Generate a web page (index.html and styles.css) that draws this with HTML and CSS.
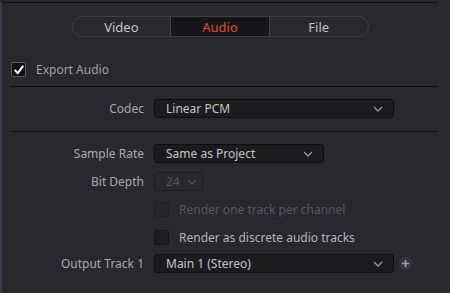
FILE: index.html
```html
<!DOCTYPE html>
<html lang="en">
<head>
    <meta charset="UTF-8">
    <title>Render Settings - Audio</title>
    <link rel="stylesheet" href="styles.css">
</head>
<body>

<div class="panel">
    <div class="topline"></div>

    <div class="tabs">
        <div class="tab">Video</div>
        <div class="tab active">Audio</div>
        <div class="tab">File</div>
    </div>

    <label class="check-row export">
        <span class="box checked">
            <svg width="12" height="12" viewBox="0 0 12 12"><path d="M2.2 6.4 L4.8 9.2 L9.8 2.4" fill="none" stroke="#fff" stroke-width="2" stroke-linecap="round" stroke-linejoin="round"/></svg>
        </span>
        Export Audio
    </label>

    <div class="divider"></div>

    <div class="row codec">
        <div class="label">Codec</div>
        <div class="select wide">Linear PCM <svg class="chev" width="10" height="6" viewBox="0 0 10 6"><path d="M1 1 L5 5 L9 1" fill="none" stroke="#9a9a9a" stroke-width="1.3"/></svg></div>
    </div>

    <div class="divider"></div>

    <div class="row rate">
        <div class="label">Sample Rate</div>
        <div class="select mid">Same as Project <svg class="chev" width="10" height="6" viewBox="0 0 10 6"><path d="M1 1 L5 5 L9 1" fill="none" stroke="#9a9a9a" stroke-width="1.3"/></svg></div>
    </div>

    <div class="row depth">
        <div class="label">Bit Depth</div>
        <div class="select small disabled">24 <svg class="chev" width="10" height="6" viewBox="0 0 10 6"><path d="M1 1 L5 5 L9 1" fill="none" stroke="#4e4e54" stroke-width="1.3"/></svg></div>
    </div>

    <div class="row opt first">
        <div class="label"></div>
        <label class="check-row disabled"><span class="box"></span>Render one track per channel</label>
    </div>

    <div class="row opt">
        <div class="label"></div>
        <label class="check-row"><span class="box"></span>Render as discrete audio tracks</label>
    </div>

    <div class="row output">
        <div class="label">Output Track 1</div>
        <div class="select wide">Main 1 (Stereo) <svg class="chev" width="10" height="6" viewBox="0 0 10 6"><path d="M1 1 L5 5 L9 1" fill="none" stroke="#9a9a9a" stroke-width="1.3"/></svg></div>
        <span class="add">
            <svg width="9" height="9" viewBox="0 0 9 9"><path d="M4.5 1 V8 M1 4.5 H8" stroke="#a0a0a4" stroke-width="1.6"/></svg>
        </span>
    </div>
</div>

</body>
</html>
```

FILE: styles.css
```css
body {
    margin: 0;
    background-color: #28282d;
    font-family: "Noto Sans", "Open Sans", sans-serif;
    font-size: 12px;
    color: #a8a8ac;
}
.panel {
    height: 293px;
    border-left: 2px solid #34404f; /* bord bleuté de la fenêtre */
    padding-right: 12px;
    box-sizing: border-box;
}
.topline {
    height: 0;
    margin-top: 2px;
    border-top: 1px solid #0e0e10;
}
.tabs {
    display: flex;
    width: 297px;
    height: 21px;
    margin: 13px auto 0;
    border: 1px solid #414148;
    border-radius: 11px;
    overflow: hidden;
    box-sizing: border-box;
}
.tab {
    flex: 1;
    display: flex;
    align-items: center;
    justify-content: center;
    font-size: 13px;
    color: #c4c4c8;
}
.tab.active {
    background-color: #161618;
    color: #e5483a;
    border-left: 1px solid #414148;
    border-right: 1px solid #414148;
}
.check-row {
    display: flex;
    align-items: center;
    gap: 10px;
    height: 15px;
    color: #b4b4b8;
}
.check-row.export {
    margin: 25px 0 0 9px;
    color: #a0a0a4;
}
.check-row.disabled {
    color: #58585e;
}
.box {
    width: 15px;
    height: 15px;
    box-sizing: border-box;
    background-color: #1e1e21;
    border: 1px solid #141416;
    border-radius: 2px;
    display: flex;
    align-items: center;
    justify-content: center;
}
.check-row.disabled .box {
    background-color: #262629;
    border-color: #1f1f22;
}
.box.checked {
    background-color: #111113;
    border-color: #5a5a60;
}
.divider {
    margin-left: 9px;
    border-top: 1px solid #0e0e10;
}
.check-row.export + .divider {
    margin-top: 9px;
}
.row {
    display: flex;
    align-items: center;
}
.label {
    width: 142px;
    padding-right: 10px;
    text-align: right;
    color: #a8a8ac;
}
.select {
    display: flex;
    align-items: center;
    justify-content: space-between;
    height: 19px;
    box-sizing: border-box;
    padding: 0 10px 0 11px;
    background-color: #1c1c1e;
    border: 1px solid #0d0d0f;
    border-radius: 3px;
    color: #c4c4c8;
}
.select.wide { width: 240px; }
.select.mid { width: 170px; }
.select.small {
    width: 49px;
    padding: 0 5px 0 11px;
}
.select.disabled {
    background-color: #29292d;
    border-color: #1d1d20;
    color: #55555b;
}
.row.codec { margin: 12px 0 13px; }
.row.rate { margin-top: 12px; }
.row.depth { margin-top: 9px; }
.row.opt { height: 17px; margin-top: 11px; }
.row.opt.first { margin-top: 10px; }
.row.output { margin-top: 8px; }
.add {
    width: 13px;
    height: 13px;
    margin-left: 5px;
    border-radius: 50%;
    background-color: #38383e;
    display: flex;
    align-items: center;
    justify-content: center;
}
```
